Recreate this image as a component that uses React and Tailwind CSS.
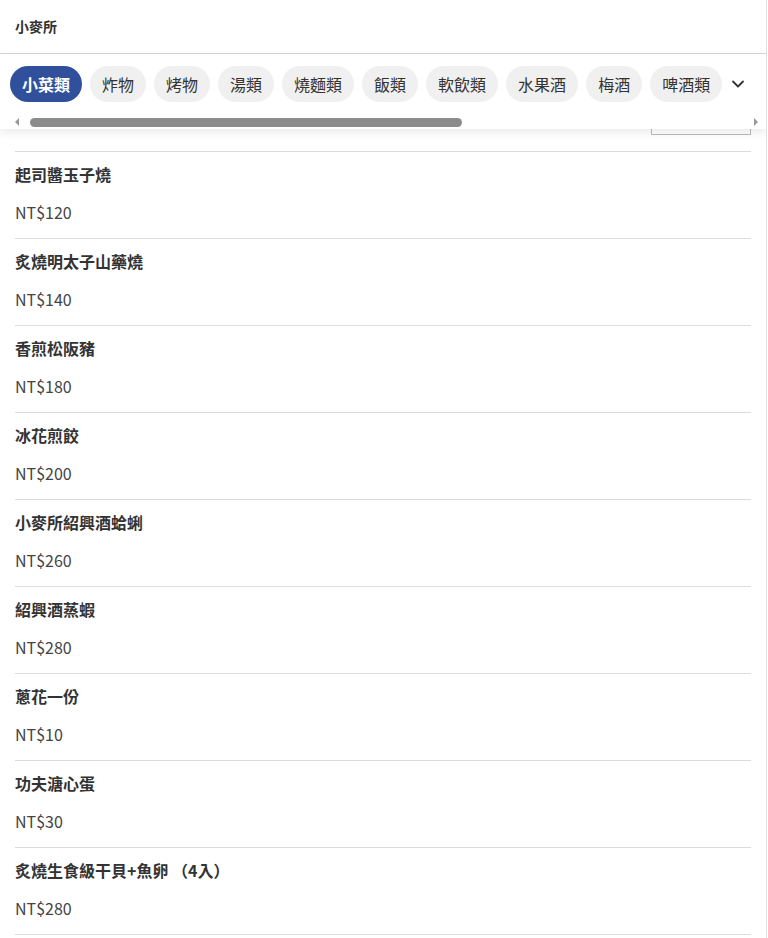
import React from "react";

const tabs = ["小菜類", "炸物", "烤物", "湯類", "燒麵類", "飯類", "軟飲類", "水果酒", "梅酒", "啤酒類"];
const items = [
  ["起司醬玉子燒", "NT$120"],
  ["炙燒明太子山藥燒", "NT$140"],
  ["香煎松阪豬", "NT$180"],
  ["冰花煎餃", "NT$200"],
  ["小麥所紹興酒蛤蜊", "NT$260"],
  ["紹興酒蒸蝦", "NT$280"],
  ["蔥花一份", "NT$10"],
  ["功夫溏心蛋", "NT$30"],
  ["炙燒生食級干貝+魚卵 （4入）", "NT$280"],
];

export default function App() {
  return (
    <div
      className="w-[767px] h-[938px] overflow-hidden bg-white border-r border-[#e0e0e0] text-[#333]"
      style={{ fontFamily: '"Noto Sans CJK TC", "Noto Sans", sans-serif' }}
    >
      <div className="h-[54px] border-b border-[#d4d4d4] flex items-center px-[15px]">
        <span className="text-[14px] font-bold text-[#333]">小麥所</span>
      </div>
      <div className="relative z-10 bg-white shadow-[0_4px_8px_rgba(0,0,0,0.08)]">
        <div className="flex items-center pt-3 pl-[10px]">
          <div className="flex gap-2">
            {tabs.map((t, i) => (
              <div
                key={t}
                className={
                  "h-9 px-3 rounded-full flex items-center text-base leading-none whitespace-nowrap " +
                  (i === 0 ? "bg-[#30509c] text-white font-bold" : "bg-[#f0f0f0] text-[#333]")
                }
              >
                {t}
              </div>
            ))}
          </div>
          <div className="w-[32px] flex justify-center">
            <svg width="14" height="14" viewBox="0 0 14 14" fill="none">
              <path d="M2 4.5L7 9.5L12 4.5" stroke="#333" strokeWidth="1.8" strokeLinecap="round" strokeLinejoin="round" />
            </svg>
          </div>
        </div>
        <div className="pt-[15px] pb-[2px] flex items-center pl-[14px] pr-[7px]">
          <svg width="6" height="10" viewBox="0 0 6 10">
            <path d="M5 1L1 5L5 9Z" fill="#999" />
          </svg>
          <div className="flex-1 ml-[10px] mr-[10px] flex">
            <div className="w-[432px] h-[9px] rounded-full bg-[#8c8c8c]" />
          </div>
          <svg width="6" height="10" viewBox="0 0 6 10">
            <path d="M1 1L5 5L1 9Z" fill="#999" />
          </svg>
        </div>
      </div>
      <div className="h-[22px] relative">
        <div className="absolute left-[651px] top-0 w-[100px] h-[6px] border-x border-b border-[#bbb]" />
      </div>
      <div className="px-[15px]">
        {items.map(([name, price]) => (
          <div key={name} className="border-t border-[#dcdcdc] pt-[10px] pb-[14px]">
            <div className="h-6 leading-6 text-base font-bold text-[#333]">{name}</div>
            <div className="h-6 leading-6 mt-[14px] text-base text-[#444]">{price}</div>
          </div>
        ))}
        <div className="border-t border-[#dcdcdc]" />
      </div>
    </div>
  );
}
